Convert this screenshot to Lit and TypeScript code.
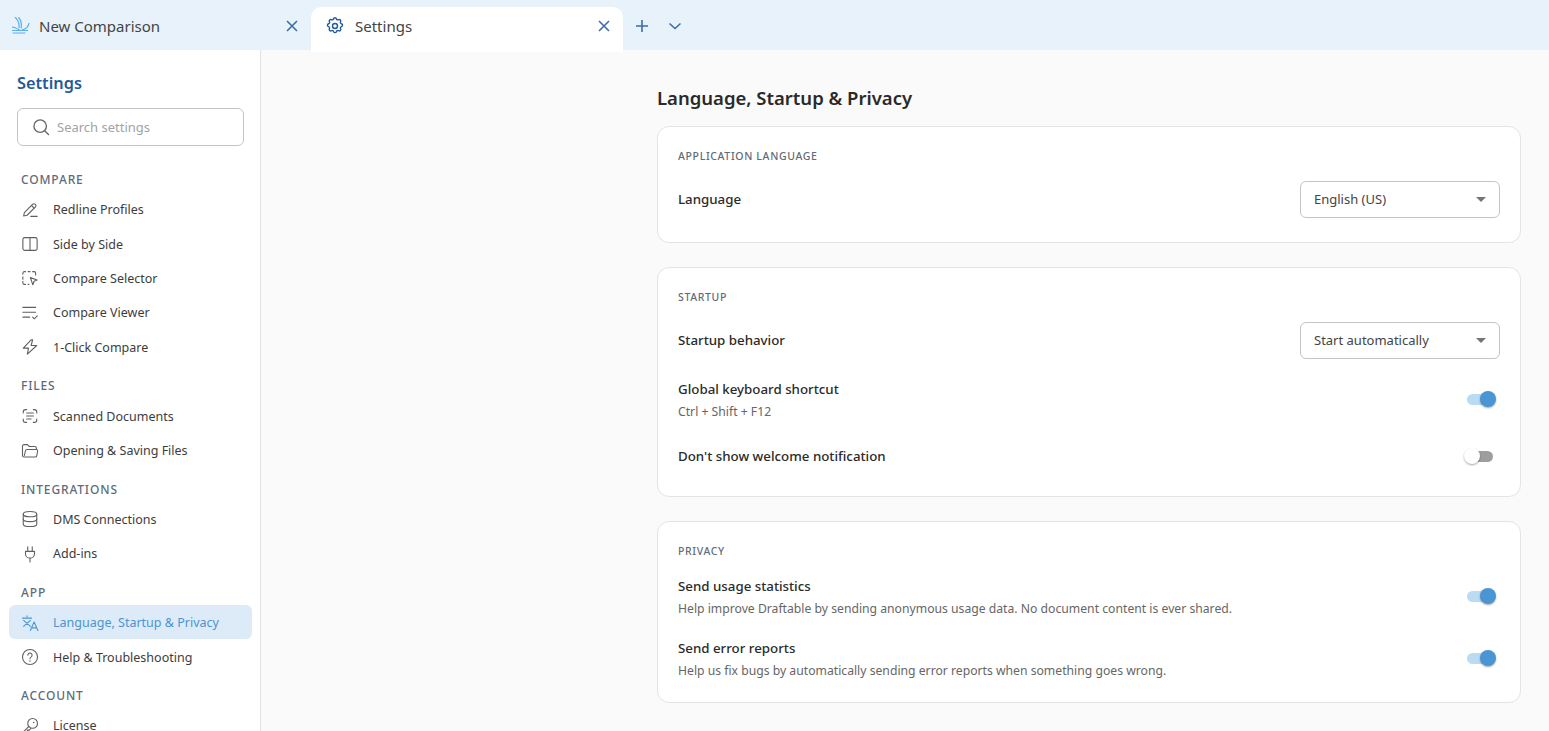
import {LitElement, html, css, svg} from 'lit';
import {customElement} from 'lit/decorators.js';

const icons: Record<string, unknown> = {
  pen: svg`<path d="M3.500 20l1-4.600L15.700 4.200a2.100 2.100 0 0 1 3 0l.6.6a2.100 2.100 0 0 1 0 3L8.100 19l-4.600 1z"/><path d="M14 6l3.500 3.500"/><path d="M13 20.500h8.500"/>`,
  columns: svg`<rect x="2.500" y="3.500" width="19" height="17" rx="2.500"/><path d="M12 3.500v17"/>`,
  selector: svg`<path d="M2.500 7V5.500a2 2 0 0 1 2-2H6M9.500 3.500h2.500M15.500 3.500h2a2 2 0 0 1 2 2V8M2.500 10.500v3M2.500 16.500v2a2 2 0 0 0 2 2H6M9.500 20.500h1"/><path d="M12.500 11.500l9 3.300-4 1.500-1.700 4.700z"/>`,
  viewer: svg`<path d="M2.500 4.500h17M2.500 11h17M2.500 17.500h9"/><path d="M15.500 17.500l2.200 2.200 4-3.900"/>`,
  bolt: svg`<path d="M13.500 2.500L3 13.500h7L8.500 21.500 21 10h-7.500l2-7.500h-2z"/>`,
  scan: svg`<path d="M7.500 3.500H6a3 3 0 0 0-3 3V8M16.500 3.500H18a3 3 0 0 1 3 3V8M7.500 20.500H6a3 3 0 0 1-3-3V16M16.500 20.500H18a3 3 0 0 0 3-3V16"/><path d="M7.500 8h9M7.500 12h9M7.500 16h6"/>`,
  folder: svg`<path d="M2 18V5.500a2 2 0 0 1 2-2h4.500L11 6h7.500a2 2 0 0 1 2 2v2"/><path d="M2 18a2 2 0 0 0 2 2h15a2 2 0 0 0 2-1.600l1.200-6.400a1.500 1.500 0 0 0-1.500-1.900H8a2 2 0 0 0-2 1.500L4.500 18"/>`,
  database: svg`<ellipse cx="12" cy="5.500" rx="9" ry="3.500"/><path d="M3 5.500v13c0 1.900 4 3.500 9 3.500s9-1.600 9-3.500v-13"/><path d="M3 12c0 1.900 4 3.500 9 3.500s9-1.600 9-3.500"/>`,
  plug: svg`<path d="M9 2.500v6M15 2.500v6M6 8.500h12v3a6 6 0 0 1-12 0v-3zM12 17.500V22.500"/>`,
  translate: svg`<path d="M2 5.500h12M8 2.500v1M3.500 8.500l9 8M12.500 8.500l-9 8"/><path d="M12.500 22L17.500 10.500 22.500 22M14.200 18.500h6.600"/>`,
  help: svg`<circle cx="12" cy="12" r="10"/><path d="M9.200 9.500a2.800 2.800 0 1 1 4.400 2.300c-1 .6-1.600 1.200-1.600 2.400"/><path d="M12 17.200v.3" stroke-width="1.800"/>`,
  key: svg`<circle cx="15.500" cy="8.500" r="6.500"/><path d="M10.500 12.500L2 21v1.500h4V20h2.500v-2.500H11l2-2"/><path d="M17 7.200v.1" stroke-width="2"/>`,
};

const groups = [
  {label: 'COMPARE', items: [['pen', 'Redline Profiles'], ['columns', 'Side by Side'], ['selector', 'Compare Selector'], ['viewer', 'Compare Viewer'], ['bolt', '1-Click Compare']]},
  {label: 'FILES', items: [['scan', 'Scanned Documents'], ['folder', 'Opening & Saving Files']]},
  {label: 'INTEGRATIONS', items: [['database', 'DMS Connections'], ['plug', 'Add-ins']]},
  {label: 'APP', items: [['translate', 'Language, Startup & Privacy'], ['help', 'Help & Troubleshooting']]},
  {label: 'ACCOUNT', items: [['key', 'License']]},
];

@customElement('app-root')
export class AppRoot extends LitElement {
  static override styles = css`
    :host {
      display: block;
      height: 731px;
      overflow: hidden;
      font-family: 'Noto Sans', sans-serif;
      color: #333;
      background: #fafafa;
    }
    .tabbar {
      display: flex;
      align-items: flex-end;
      height: 50px;
      background: #e7f2fa;
    }
    .tab {
      display: flex;
      align-items: center;
      box-sizing: border-box;
      height: 43px;
      width: 311px;
      padding: 0 12px 6px 12px;
      font-size: 15px;
      color: #444;
    }
    .tab.active {
      width: 312px;
      height: 45px;
      margin-bottom: -2px;
      padding: 0 12px 8px 14px;
      background: #fff;
      border-radius: 10px 10px 0 0;
      position: relative;
    }
    .tab .logo {
      width: 18px;
      height: 18px;
      margin-right: 9px;
      flex: none;
    }
    .tab .gear {
      width: 20px;
      height: 20px;
      margin-right: 10px;
      flex: none;
      fill: none;
      stroke: #1f5a9a;
      stroke-width: 1.7;
    }
    .tab .name {
      flex: 1;
    }
    .tab-btn {
      width: 14px;
      height: 14px;
      flex: none;
      fill: none;
      stroke: #3b6ea8;
      stroke-width: 1.6;
    }
    .tab-actions {
      display: flex;
      align-items: center;
      gap: 19px;
      height: 43px;
      padding: 0 0 6px 12px;
      box-sizing: border-box;
    }
    .body {
      display: flex;
      height: 681px;
    }
    nav {
      box-sizing: border-box;
      width: 261px;
      flex: none;
      padding: 21px 8px 0 9px;
      background: #fff;
      border-right: 1px solid #e2e2e2;
    }
    nav h2 {
      margin: 0 0 12px 8px;
      font-size: 16.300px;
      line-height: 25px;
      font-weight: 600;
      color: #1f5a9a;
    }
    .search {
      display: flex;
      align-items: center;
      box-sizing: border-box;
      height: 38px;
      margin: 0 8px 19px 8px;
      padding: 0 13px;
      border: 1px solid #c4c4c4;
      border-radius: 6px;
      font-size: 13px;
      color: #a3a3a3;
    }
    .search svg {
      width: 20px;
      height: 20px;
      margin-right: 6px;
      fill: none;
      stroke: #666;
      stroke-width: 1.6;
    }
    .group {
      margin-bottom: 8px;
    }
    .group-label {
      height: 26.500px;
      line-height: 30px;
      padding-left: 12px;
      font-size: 12px;
      font-weight: 500;
      letter-spacing: 0.85px;
      color: #5f6b7a;
    }
    .item {
      display: flex;
      align-items: center;
      box-sizing: border-box;
      height: 34.400px;
      padding: 2px 0 0 12px;
      border-radius: 6px;
      font-size: 12.500px;
      color: #3d3d3d;
    }
    .item svg {
      width: 18px;
      height: 18px;
      margin-right: 14px;
      flex: none;
      fill: none;
      stroke: #606060;
      stroke-width: 1.45;
      stroke-linecap: round;
      stroke-linejoin: round;
    }
    .item.active {
      background: #dcebf7;
      color: #4a95d3;
    }
    .item.active svg {
      stroke: #4a95d3;
    }
    main {
      flex: 1;
      box-sizing: border-box;
      display: flex;
      flex-direction: column;
      align-items: flex-end;
      padding: 34px 28px 0 0;
    }
    .column {
      width: 864px;
    }
    h1 {
      margin: 0 0 14px 0;
      font-size: 18.500px;
      line-height: 28px;
      font-weight: 600;
      color: #2a2a2a;
    }
    .card {
      box-sizing: border-box;
      margin-bottom: 24px;
      padding: 21px 20px 14px 20px;
      background: #fff;
      border: 1px solid #e4e4e4;
      border-radius: 12px;
    }
    .card:last-child {
      padding-bottom: 13px;
    }
    .card-label {
      height: 16px;
      line-height: 16px;
      margin-bottom: 6px;
      font-size: 10.500px;
      font-weight: 500;
      letter-spacing: 0.65px;
      color: #5f6b7a;
    }
    .row {
      display: flex;
      align-items: center;
      justify-content: space-between;
      height: 62px;
    }
    .row.select-row {
      height: 58px;
    }
    .select-row + .row {
      margin-top: -1px;
    }
    .row.single {
      height: 52px;
    }
    .two-line {
      padding-top: 2px;
    }
    .title {
      font-size: 13.300px;
      line-height: 20px;
      font-weight: 500;
      color: #2a2a2a;
    }
    .sub {
      margin-top: 4px;
      font-size: 12.200px;
      line-height: 18px;
      color: #666;
    }
    .select {
      display: flex;
      align-items: center;
      justify-content: space-between;
      box-sizing: border-box;
      width: 200px;
      height: 37px;
      padding: 0 13px;
      border: 1px solid #c4c4c4;
      border-radius: 6px;
      font-size: 13px;
      color: #444;
    }
    .caret {
      width: 0;
      height: 0;
      border-left: 5px solid transparent;
      border-right: 5px solid transparent;
      border-top: 5px solid #757575;
    }
    .switch {
      position: relative;
      width: 32px;
      height: 17px;
      margin-right: 4px;
      flex: none;
    }
    .track {
      position: absolute;
      left: 3px;
      top: 3px;
      width: 26px;
      height: 11px;
      border-radius: 6px;
      background: #9e9e9e;
    }
    .thumb {
      position: absolute;
      left: 0;
      top: 0;
      width: 16px;
      height: 16px;
      border-radius: 50%;
      background: #fff;
      box-shadow: 0 1px 2px rgba(0, 0, 0, 0.35);
    }
    .switch.on .track {
      background: #b9dcf2;
    }
    .switch.on .thumb {
      left: 16px;
      background: #4a95d3;
    }
  `;

  private close() {
    return html`<svg class="tab-btn" viewBox="0 0 14 14"><path d="M2 2l10 10M12 2L2 12" /></svg>`;
  }

  private toggle(on: boolean) {
    return html`<div class="switch ${on ? 'on' : ''}"><div class="track"></div><div class="thumb"></div></div>`;
  }

  private row(title: string, sub: string, on: boolean) {
    return html`<div class="row ${sub ? '' : 'single'}">
      <div class="${sub ? 'two-line' : ''}">
        <div class="title">${title}</div>
        ${sub ? html`<div class="sub">${sub}</div>` : ''}
      </div>
      ${this.toggle(on)}
    </div>`;
  }

  private selectRow(title: string, value: string) {
    return html`<div class="row select-row">
      <div class="title">${title}</div>
      <div class="select">${value}<span class="caret"></span></div>
    </div>`;
  }

  override render() {
    return html`
      <div class="tabbar">
        <div class="tab">
          <svg class="logo" viewBox="0 0 18 18" fill="none" stroke="#5aaef0" stroke-width="1.200">
            <path d="M3 0c3 3 4.500 7 4 11" />
            <path d="M6.500 0c2.500 3 3.500 7 2.500 11.500" />
            <path d="M17 6c-.5 3.500-3 6-7 7" />
            <path d="M0 10c3 .5 6 1.500 8 3.500M0 13.500h16M.5 16h13" />
          </svg>
          <span class="name">New Comparison</span>
          ${this.close()}
        </div>
        <div class="tab active">
          <svg class="gear" viewBox="0 0 24 24" stroke-linejoin="round">
            <path d="M10.300 3.300c.4-1.700 2.900-1.700 3.400 0a1.700 1.700 0 0 0 2.600 1.100c1.500-.9 3.300.8 2.400 2.400a1.700 1.700 0 0 0 1 2.500c1.800.4 1.800 2.900 0 3.400a1.700 1.700 0 0 0-1 2.500c.9 1.600-.9 3.300-2.400 2.400a1.700 1.700 0 0 0-2.600 1.100c-.4 1.700-2.900 1.700-3.400 0a1.700 1.700 0 0 0-2.600-1.100c-1.500.9-3.300-.8-2.400-2.400a1.700 1.700 0 0 0-1-2.500c-1.800-.4-1.800-2.900 0-3.400a1.700 1.700 0 0 0 1-2.500c-.9-1.600.9-3.300 2.400-2.400a1.700 1.700 0 0 0 2.600-1.100z" />
            <circle cx="12" cy="12" r="3" />
          </svg>
          <span class="name">Settings</span>
          ${this.close()}
        </div>
        <div class="tab-actions">
          <svg class="tab-btn" viewBox="0 0 14 14"><path d="M7 1v12M1 7h12" /></svg>
          <svg class="tab-btn" viewBox="0 0 14 14"><path d="M1.500 4.500l5.500 5 5.500-5" /></svg>
        </div>
      </div>
      <div class="body">
        <nav>
          <h2>Settings</h2>
          <div class="search">
            <svg viewBox="0 0 24 24" stroke-linecap="round"><circle cx="11" cy="11" r="7.500" /><path d="M16.500 16.500L21 21" /></svg>
            Search settings
          </div>
          ${groups.map(
            (g) => html`<div class="group">
              <div class="group-label">${g.label}</div>
              ${g.items.map(
                ([icon, name]) => html`<div class="item ${name.startsWith('Language') ? 'active' : ''}">
                  <svg viewBox="0 0 24 24">${icons[icon]}</svg>${name}
                </div>`
              )}
            </div>`
          )}
        </nav>
        <main>
          <div class="column">
            <h1>Language, Startup &amp; Privacy</h1>
            <section class="card">
              <div class="card-label">APPLICATION LANGUAGE</div>
              ${this.selectRow('Language', 'English (US)')}
            </section>
            <section class="card">
              <div class="card-label">STARTUP</div>
              ${this.selectRow('Startup behavior', 'Start automatically')}
              ${this.row('Global keyboard shortcut', 'Ctrl + Shift + F12', true)}
              ${this.row("Don't show welcome notification", '', false)}
            </section>
            <section class="card">
              <div class="card-label">PRIVACY</div>
              ${this.row('Send usage statistics', 'Help improve Draftable by sending anonymous usage data. No document content is ever shared.', true)}
              ${this.row('Send error reports', 'Help us fix bugs by automatically sending error reports when something goes wrong.', true)}
            </section>
          </div>
        </main>
      </div>
    `;
  }
}
